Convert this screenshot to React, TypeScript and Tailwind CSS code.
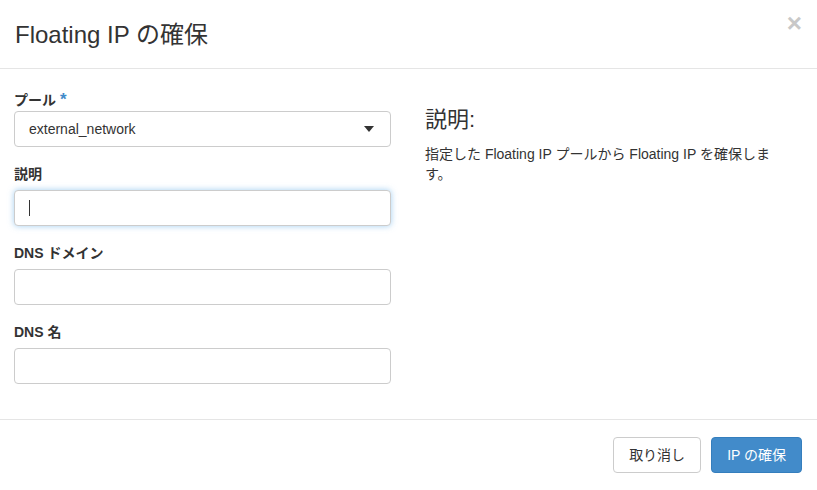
export default function App() {
  const f = { fontFamily: '"Liberation Sans", "Noto Sans CJK JP", sans-serif' };
  const input = "w-full h-[36px] rounded-[4px] border border-[#cccccc] bg-white px-3 text-[14px] text-[#333]";
  return (
    <div style={f} className="w-[817px] h-[490px] bg-white text-[#333] flex flex-col">
      <div className="h-[69px] border-b border-[#e5e5e5] flex items-center justify-between pl-[15px] pr-[15px]">
        <h1 className="text-[24px] font-normal pt-[2px]">Floating IP の確保</h1>
        <span className="text-[26px] font-bold text-[#c8c8c8] leading-none -mt-[22px]">×</span>
      </div>
      <div className="h-[350px] flex px-[14px] pt-[18px]">
        <div className="w-[377px] flex flex-col">
          <label className="text-[14px] font-bold h-[20px] mb-[4px]">プール <span className="text-[#428bca] text-[17px]">*</span></label>
          <div className={input + " flex items-center justify-between"}>
            <span className="pl-[2px]">external_network</span>
            <svg width="10" height="6" viewBox="0 0 10 6" className="mr-[4px]"><path d="M0 0h10L5 6z" fill="#333"/></svg>
          </div>
          <label className="text-[14px] font-bold h-[20px] mt-[17px] mb-[6px]">説明</label>
          <div className={input + " border-[#66afe9] shadow-[0_0_6px_rgba(102,175,233,0.6)] flex items-center"}>
            <span className="w-px h-[16px] bg-[#333] ml-[2px]" />
          </div>
          <label className="text-[14px] font-bold h-[20px] mt-[17px] mb-[6px]">DNS ドメイン</label>
          <div className={input} />
          <label className="text-[14px] font-bold h-[20px] mt-[17px] mb-[6px]">DNS 名</label>
          <div className={input} />
        </div>
        <div className="ml-[34px] flex-1 pt-[16px]">
          <h2 className="text-[22px] font-normal mb-[8px]">説明:</h2>
          <p className="text-[14px] leading-[20px] pr-[10px]">指定した Floating IP プールから Floating IP を確保します。</p>
        </div>
      </div>
      <div className="border-t border-[#e5e5e5] flex-1 flex justify-end items-start pt-[17px] pr-[15px] gap-[10px]">
        <button className="h-[36px] px-[15px] rounded-[4px] border border-[#cccccc] bg-white text-[14px] text-[#333]">取り消し</button>
        <button className="h-[36px] px-[15px] rounded-[4px] border border-[#357ebd] bg-[#428bca] text-[14px] text-white">IP の確保</button>
      </div>
    </div>
  );
}
